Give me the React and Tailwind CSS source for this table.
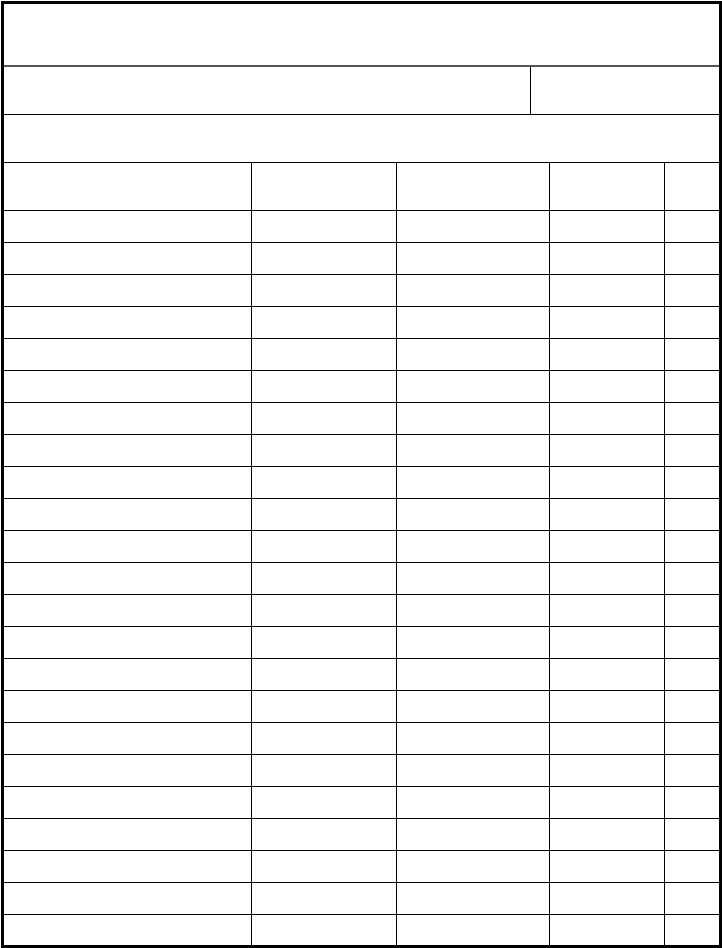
import React from "react";

const rowCount = 23;
const cols = 5;

export default function App() {
  const rows = Array.from({ length: rowCount });

  return (
    <div className="w-[722px] h-[948px] bg-white">
      <div className="ml-[1px] mt-[1px] w-[721px] h-[947px] border-[3px] border-black flex flex-col">
        {/* title */}
        <div className="h-[63px] border-b-2 border-[#555]"></div>

        {/* name / date */}
        <div className="flex h-[48px] border-b border-black">
          <div className="w-[527px] border-r border-black"></div>
          <div className="flex-1"></div>
        </div>

        {/* subtitle */}
        <div className="h-[48px] border-b border-black"></div>

        {/* table */}
        <div className="grid grid-cols-[248px_145px_153px_115px_1fr] flex-1 grid-rows-[48px_repeat(22,32px)_1fr]">
          {Array.from({ length: cols }).map((_, c) => (
            <div
              key={"h" + c}
              className={
                "border-b border-black " + (c < cols - 1 ? "border-r" : "")
              }
            ></div>
          ))}
          {rows.map((_, r) =>
            Array.from({ length: cols }).map((_, c) => (
              <div
                key={r + "-" + c}
                className={
                  (r < rowCount - 1 ? "border-b " : "") +
                  (c < cols - 1 ? "border-r " : "") +
                  "border-black"
                }
              ></div>
            ))
          )}
        </div>
      </div>
    </div>
  );
}
